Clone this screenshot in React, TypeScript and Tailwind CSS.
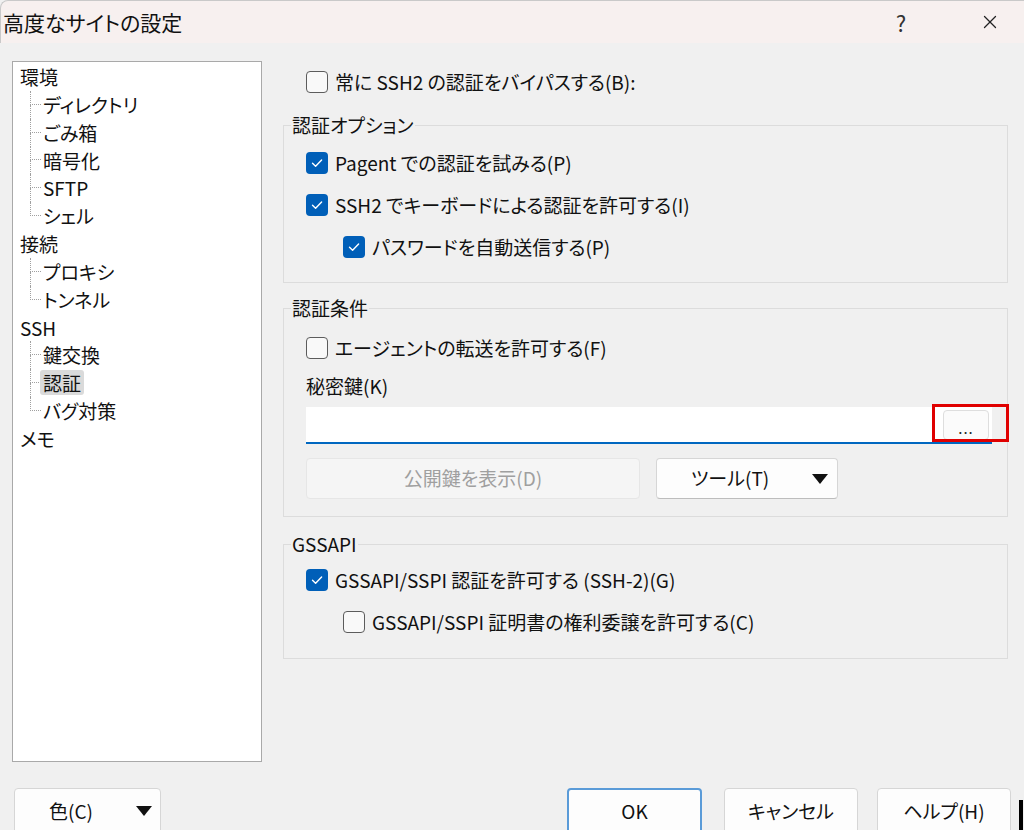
import { X } from "lucide-react";

const font = "[font-family:'Noto_Sans_CJK_JP','Noto_Sans',sans-serif] [font-feature-settings:'palt']";

type TreeNode = { label: string; children?: string[] };

const tree: TreeNode[] = [
  { label: "環境", children: ["ディレクトリ", "ごみ箱", "暗号化", "SFTP", "シェル"] },
  { label: "接続", children: ["プロキシ", "トンネル"] },
  { label: "SSH", children: ["鍵交換", "認証", "バグ対策"] },
  { label: "メモ" },
];

function Check({ checked }: { checked?: boolean }) {
  if (checked) {
    return (
      <span className="flex h-[22px] w-[22px] shrink-0 items-center justify-center rounded-[4px] bg-[#005fb8]">
        <svg width="22" height="22" viewBox="0 0 22 22" fill="none">
          <path d="M6.5 11.2 L9.6 14.3 L15.6 8" stroke="#ffffff" strokeWidth="1.4" strokeLinecap="round" strokeLinejoin="round" />
        </svg>
      </span>
    );
  }
  return <span className="h-[22px] w-[22px] shrink-0 rounded-[4px] border border-[#5c5c5c] bg-[#f9f9f9]" />;
}

function CheckRow({ checked, label, nested }: { checked?: boolean; label: string; nested?: boolean }) {
  return (
    <div className={nested ? "flex h-[42px] items-center gap-[7px] pl-[37px]" : "flex h-[42px] items-center gap-[7px]"}>
      <Check checked={checked} />
      <span className="leading-[26px]">{label}</span>
    </div>
  );
}

function Group({ title, className, children }: { title: string; className?: string; children: React.ReactNode }) {
  return (
    <fieldset className={`w-[725px] border border-[#dcdcdc] ${className ?? ""}`}>
      <legend className="ml-[7px] px-[1px] leading-[26px]">{title}</legend>
      <div className="pl-[22px]">{children}</div>
    </fieldset>
  );
}

function Triangle() {
  return (
    <svg width="16" height="10" viewBox="0 0 16 10">
      <path d="M0 0 H16 L8 10 Z" fill="#111111" />
    </svg>
  );
}

function TreePanel() {
  return (
    <div className="h-[701px] w-[250px] shrink-0 border border-[#a9a9a9] bg-white pt-[1px] text-[19px] leading-[27.85px] text-[#111]">
      {tree.map((node) => (
        <div key={node.label}>
          <div className="pl-[7px]">{node.label}</div>
          {node.children?.map((c, i) => {
            const last = i === node.children!.length - 1;
            return (
              <div key={c} className="ml-[17px] flex h-[27.85px]">
                <div className="flex w-[11px] flex-col">
                  <div className="h-1/2 border-b border-l border-dotted border-[#a0a0a0]" />
                  {!last && <div className="h-1/2 border-l border-dotted border-[#a0a0a0]" />}
                </div>
                {c === "認証" ? (
                  <span className="ml-[-1px] mt-[1px] h-[25px] rounded-[3px] bg-[#dadada] px-[3px] leading-[25px]">{c}</span>
                ) : (
                  <span className="ml-[2px]">{c}</span>
                )}
              </div>
            );
          })}
        </div>
      ))}
    </div>
  );
}

export default function App() {
  return (
    <div className={`flex h-[830px] w-[1024px] flex-col overflow-hidden bg-[#f0f0f0] text-[#111] ${font}`}>
      <div className="flex h-[43px] shrink-0 items-center rounded-tl-[8px] border-l border-t border-[#c9c9c9] bg-[#f7f0ef] pl-[2px]">
        <span className="text-[21px] leading-[30px]">高度なサイトの設定</span>
        <span className="ml-auto w-[20px] text-center text-[22px] leading-[30px] text-[#333]">?</span>
        <X className="ml-[68px] mr-[23px] text-[#222]" size={22} strokeWidth={1.4} />
      </div>

      <div className="flex pt-[18px] text-[19px]">
        <div className="ml-[12px]">
          <TreePanel />
        </div>

        <div className="ml-[21px] pt-[7px]">
          <div className="flex h-[28px] items-center gap-[7px] pl-[23px]">
            <Check />
            <span className="leading-[26px]">常に SSH2 の認証をバイパスする(B):</span>
          </div>

          <Group title="認証オプション" className="mt-[16px]">
            <div className="mt-[4px] pb-[14px]">
              <CheckRow checked label="Pagent での認証を試みる(P)" />
              <CheckRow checked label="SSH2 でキーボードによる認証を許可する(I)" />
              <CheckRow checked nested label="パスワードを自動送信する(P)" />
            </div>
          </Group>

          <Group title="認証条件" className="mt-[12px]">
            <div className="mt-[6px] pb-[17px]">
              <CheckRow label="エージェントの転送を許可する(F)" />
              <div className="flex h-[34px] items-center leading-[26px]">秘密鍵(K)</div>
              <div className="relative mt-[4px] flex h-[37px] w-[686px] items-center justify-end border-b-2 border-[#0067c0] bg-white pr-[3px]">
                <div className="flex h-[30px] w-[46px] items-end justify-center rounded-[4px] border border-[#dedede] bg-[#fbfbfb] pb-[4px] text-[15px] leading-[15px] tracking-[1px] text-[#222]">
                  ...
                </div>
                <div className="absolute left-[626px] top-[-3px] h-[38px] w-[77px] border-[3px] border-[#e00000]" />
              </div>
              <div className="mt-[14px] flex gap-[16px]">
                <div className="flex h-[41px] w-[334px] items-center justify-center rounded-[4px] border border-[#e6e6e6] bg-[#f5f5f5] text-[#9f9f9f]">
                  公開鍵を表示(D)
                </div>
                <div className="flex h-[41px] w-[182px] items-center justify-between rounded-[4px] border border-[#d6d6d6] border-b-[#bdbdbd] bg-[#fdfdfd] pl-[34px] pr-[9px]">
                  <span>ツール(T)</span>
                  <Triangle />
                </div>
              </div>
            </div>
          </Group>

          <Group title="GSSAPI" className="mt-[14px]">
            <div className="mt-[2px] pb-[15px]">
              <CheckRow checked label="GSSAPI/SSPI 認証を許可する (SSH-2)(G)" />
              <CheckRow nested label="GSSAPI/SSPI 証明書の権利委譲を許可する(C)" />
            </div>
          </Group>
        </div>
      </div>

      <div className="mt-[26px] flex items-start pr-[1px] text-[19px]">
        <div className="ml-[14px] flex h-[46px] w-[147px] items-center justify-between rounded-[4px] border border-[#d6d6d6] bg-[#fdfdfd] pl-[34px] pr-[8px]">
          <span>色(C)</span>
          <Triangle />
        </div>
        <div className="ml-auto flex h-[46px] w-[135px] items-center justify-center rounded-[4px] border-2 border-[#5a9bd8] bg-[#fdfdfd]">
          OK
        </div>
        <div className="ml-[22px] flex h-[46px] w-[134px] items-center justify-center rounded-[4px] border border-[#d6d6d6] bg-[#fdfdfd]">
          キャンセル
        </div>
        <div className="ml-[19px] flex h-[46px] w-[134px] items-center justify-center rounded-[4px] border border-[#d6d6d6] bg-[#fdfdfd]">
          ヘルプ(H)
        </div>
        <div className="ml-[8px] mt-[12px] h-[34px] w-[4px] bg-black" />
      </div>
    </div>
  );
}
